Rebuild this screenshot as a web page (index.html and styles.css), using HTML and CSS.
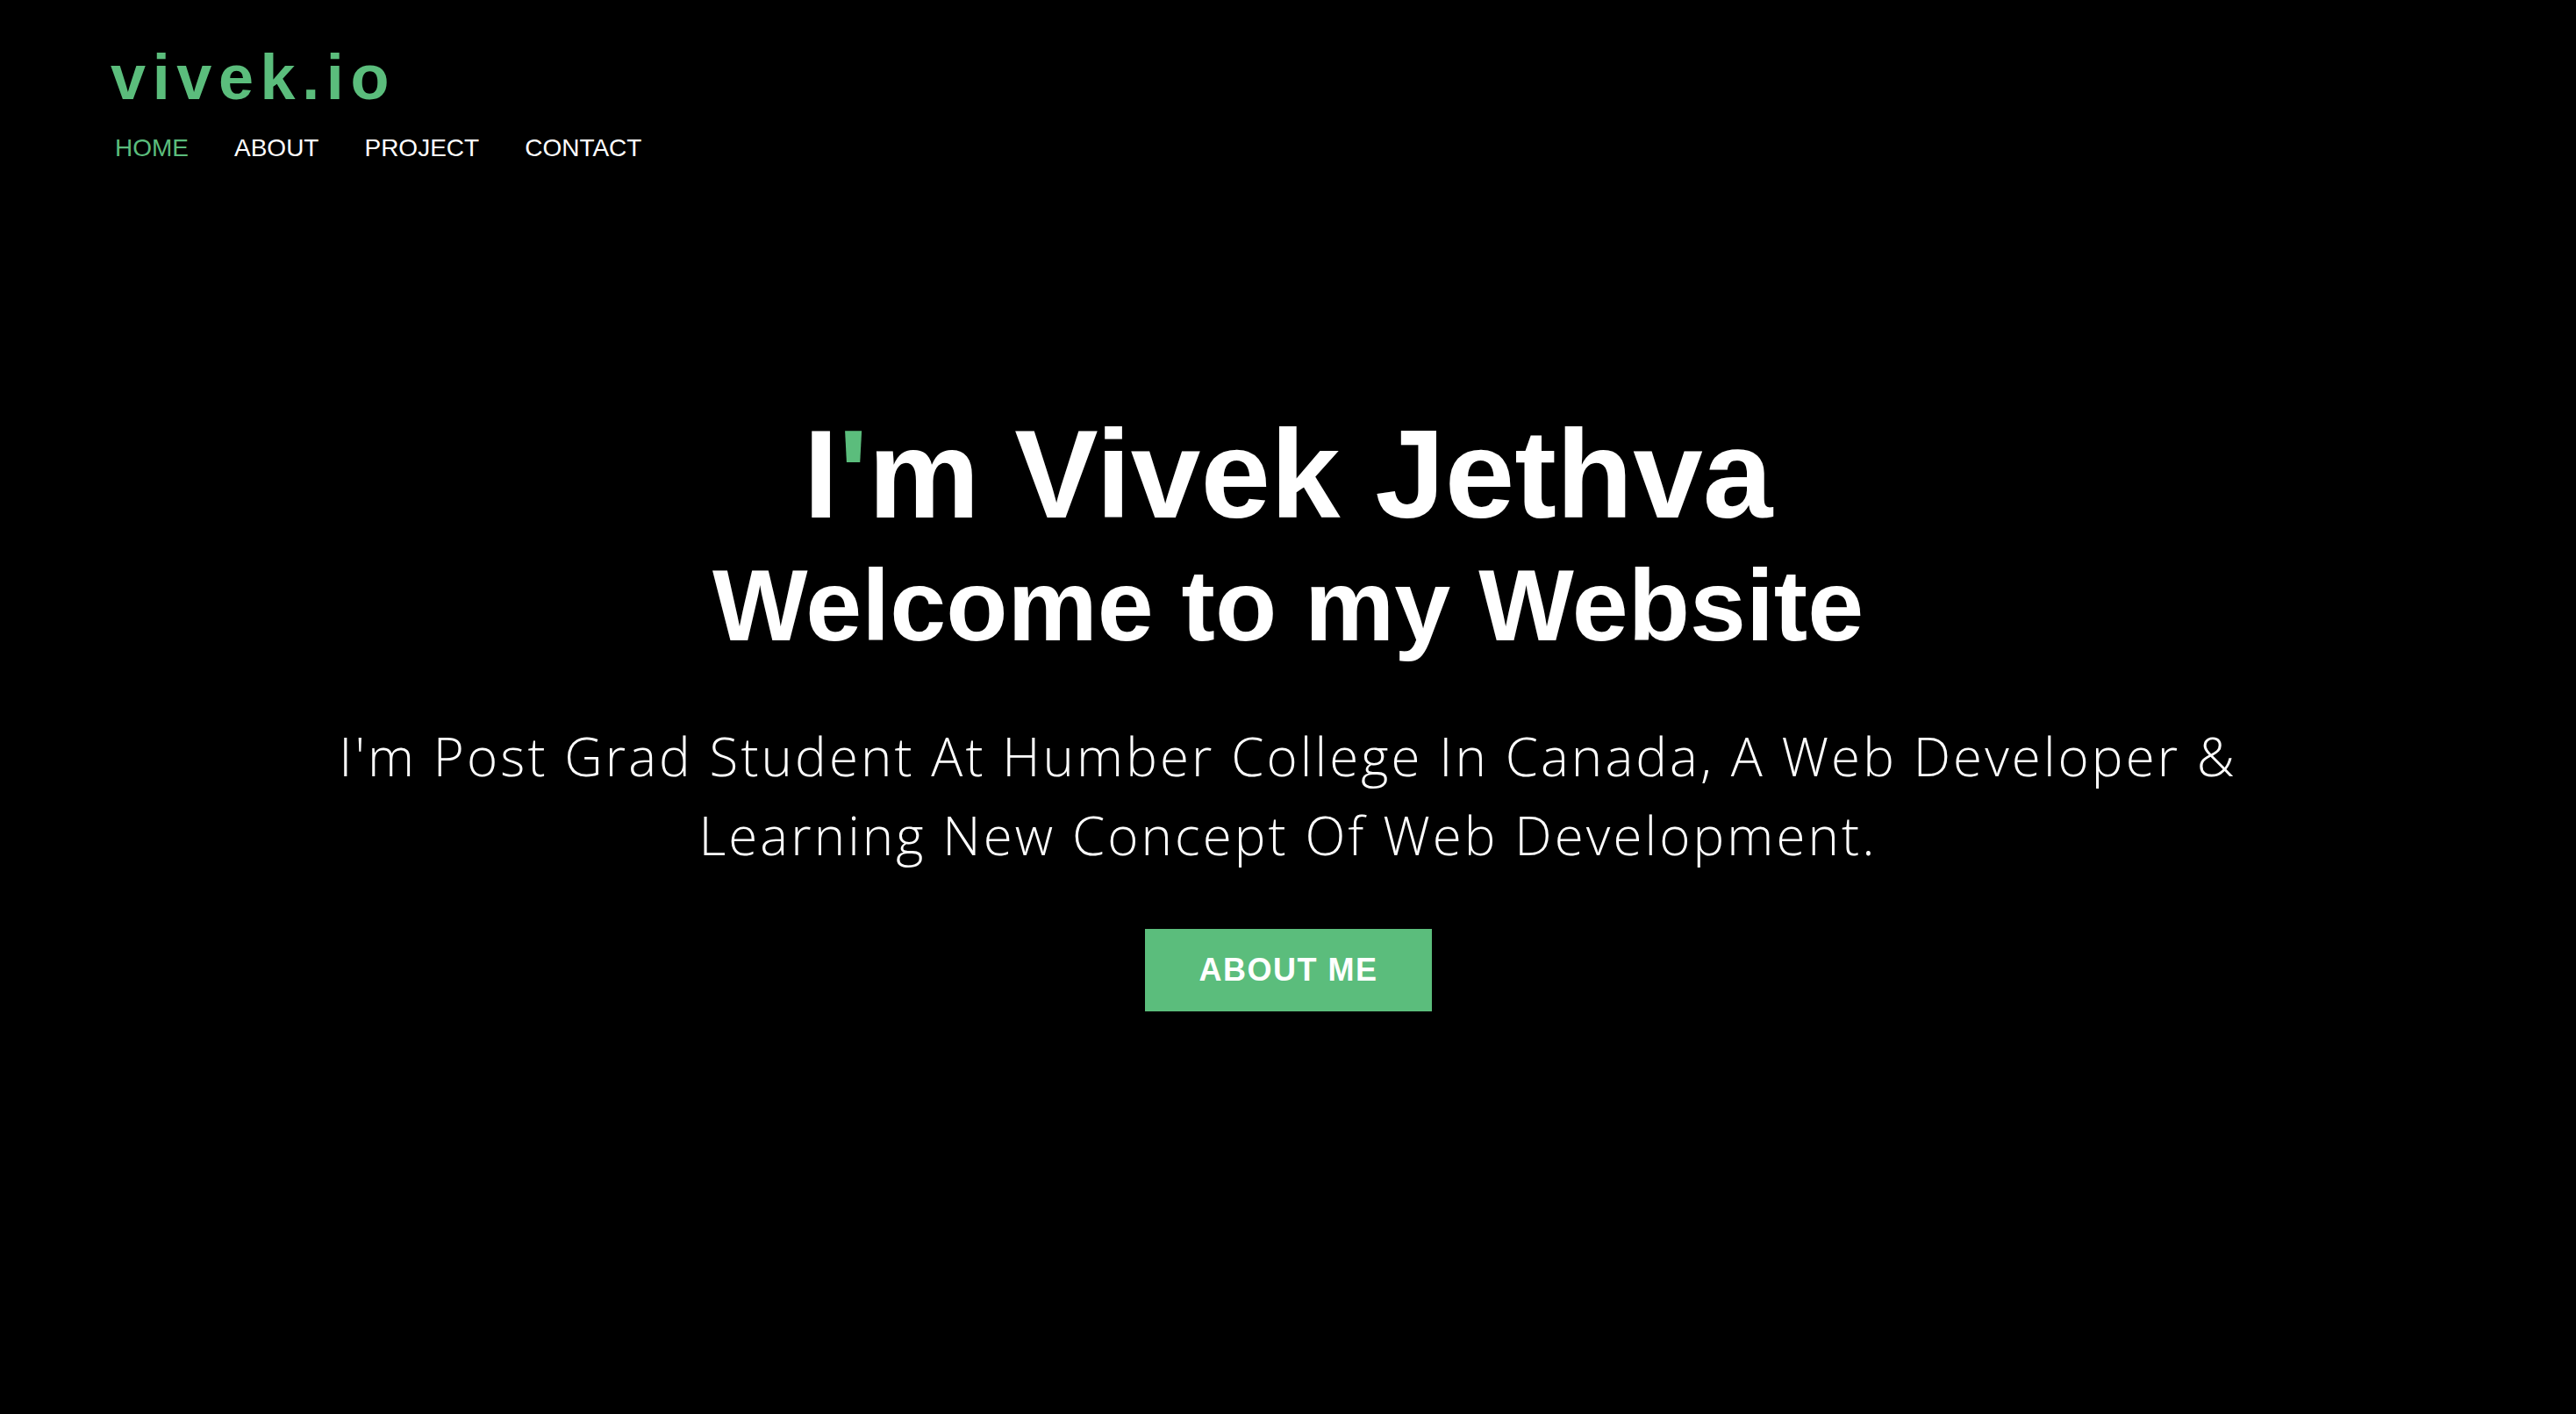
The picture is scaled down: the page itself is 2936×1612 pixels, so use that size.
FILE: index.html
```html
<!DOCTYPE html>
<html lang="en">
<head>
<meta charset="utf-8">
<title>vivek.io</title>
<link rel="stylesheet" href="styles.css">
</head>
<body>
<header class="site-header">
  <a class="logo" href="#">vivek.io</a>
  <nav class="nav">
    <a class="nav-link active" href="#">HOME</a>
    <a class="nav-link" href="#">ABOUT</a>
    <a class="nav-link" href="#">PROJECT</a>
    <a class="nav-link" href="#">CONTACT</a>
  </nav>
</header>
<main class="hero">
  <h1 class="hero-title">I<span class="accent">'</span>m Vivek Jethva</h1>
  <h2 class="hero-subtitle">Welcome to my Website</h2>
  <p class="hero-text">I'm Post Grad Student At Humber College In Canada, A Web Developer &amp;<br>Learning New Concept Of Web Development.</p>
  <a class="btn" href="#">ABOUT ME</a>
</main>
</body>
</html>
```

FILE: styles.css
```css
html, body {
  margin: 0;
  padding: 0;
  background: #000;
  color: #fff;
}
body {
  font-family: "Liberation Sans", Arial, sans-serif;
  min-height: 1612px;
}
a { text-decoration: none; }

.site-header {
  padding: 52px 0 0 126px;
  display: flex;
  flex-direction: column;
  align-items: flex-start;
}
.logo {
  font-size: 72px;
  line-height: 1;
  font-weight: 700;
  letter-spacing: 7.6px;
  color: #5bbd7c;
}
.nav {
  margin-top: 31px;
  margin-left: 5px;
  display: flex;
  gap: 52px;
}
.nav-link {
  font-size: 28px;
  line-height: 1;
  color: #fff;
}
.nav-link.active { color: #5bbd7c; }

.hero {
  display: flex;
  flex-direction: column;
  align-items: center;
  text-align: center;
  padding-top: 286px;
}
.hero-title {
  margin: 0;
  font-size: 143px;
  line-height: 1;
  font-weight: 700;
}
.accent { color: #5bbd7c; }
.hero-subtitle {
  margin: 21px 0 0;
  font-size: 115px;
  line-height: 1;
  font-weight: 700;
}
.hero-text {
  margin: 69px 0 0;
  font-family: "Open Sans", "Noto Sans", sans-serif;
  font-weight: 300;
  font-size: 60px;
  line-height: 90px;
  letter-spacing: 3.1px;
}
.btn {
  margin-top: 62px;
  background: #5bbd7c;
  color: #fff;
  font-size: 36px;
  line-height: 1;
  font-weight: 700;
  letter-spacing: 1.5px;
  padding: 29px 61px 29px 62px;
}
```
